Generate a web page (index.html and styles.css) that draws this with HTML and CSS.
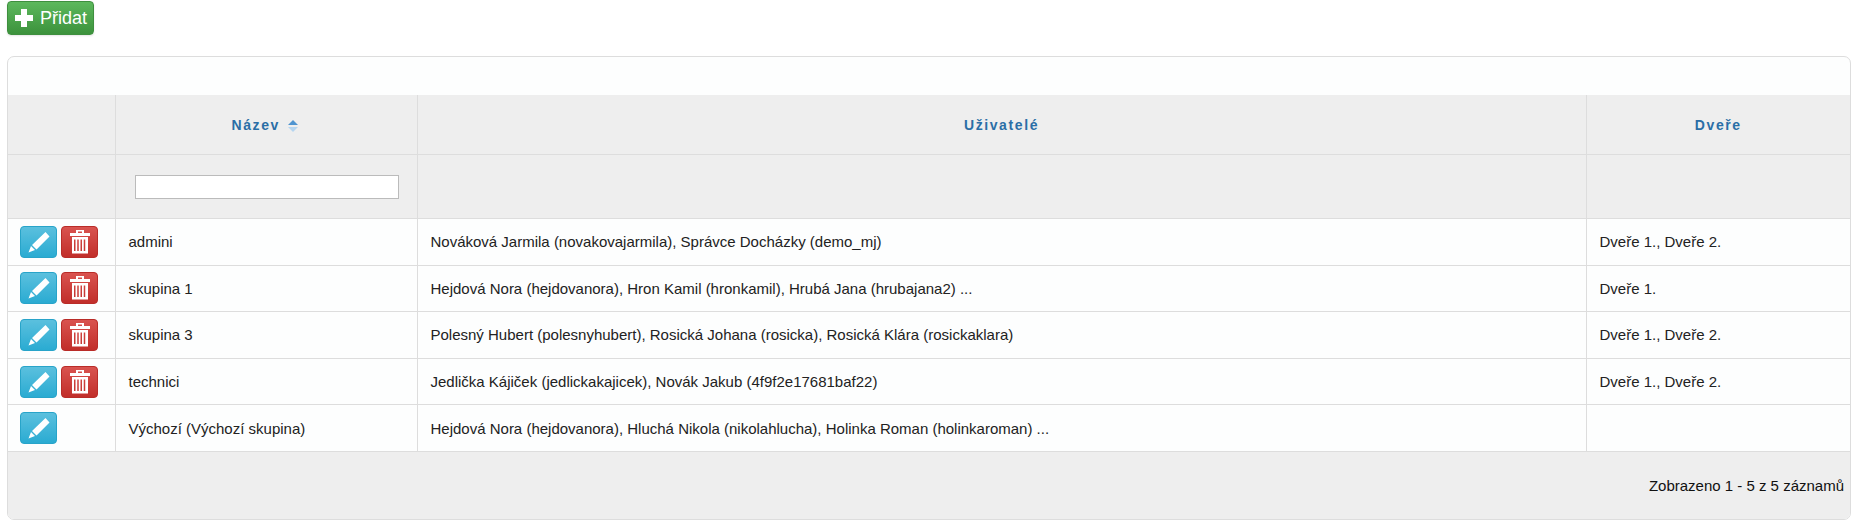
FILE: index.html
```html
<!DOCTYPE html>
<html lang="cs">
<head>
    <meta charset="UTF-8">
    <meta name="viewport" content="width=device-width, initial-scale=1.0">
    <title>Skupiny</title>
    <link rel="stylesheet" href="styles.css">
</head>
<body>
    <a class="btn btn-add" href="#">
        <svg class="icon-plus" viewBox="0 0 20 20"><path d="M7 1h6v6h6v6h-6v6H7v-6H1V7h6z"/></svg>
        Přidat
    </a>

    <div class="panel">
        <div class="panel-top"></div>
        <table class="grid">
            <colgroup>
                <col class="col-actions">
                <col class="col-name">
                <col class="col-users">
                <col class="col-doors">
            </colgroup>
            <thead>
                <tr class="head-row">
                    <th></th>
                    <th class="sorted">Název <svg class="sort" viewBox="0 0 10 12"><path class="sort-up" d="M5 0l5 5H0z"/><path class="sort-down" d="M0 7h10l-5 5z"/></svg></th>
                    <th>Uživatelé</th>
                    <th>Dveře</th>
                </tr>
                <tr class="filter-row">
                    <th></th>
                    <th><input type="text" class="filter"></th>
                    <th></th>
                    <th></th>
                </tr>
            </thead>
            <tbody>
                <tr>
                    <td class="actions">
                        <a class="btn btn-icon btn-edit" href="#"><svg viewBox="0 0 24 24"><path d="M18.500 2l4 4.500L9.500 19.500l-4.500-4.500zM4 16l4 4-6.500 2.500z"/></svg></a>
                        <a class="btn btn-icon btn-del" href="#"><svg viewBox="0 0 24 24"><path fill-rule="evenodd" d="M8 3V0h8v3h6v3H2V3zM10 1.500V3h4V1.500zM4 7h16v16.500H4zM6 9.500v11.500h1.500V9.500zM9.250 9.500v11.500h1.500V9.500zM12.500 9.500v11.500H14V9.500zM15.750 9.500v11.500h1.500V9.500z"/></svg></a>
                    </td>
                    <td>admini</td>
                    <td>Nováková Jarmila (novakovajarmila), Správce Docházky (demo_mj)</td>
                    <td>Dveře 1., Dveře 2.</td>
                </tr>
                <tr>
                    <td class="actions">
                        <a class="btn btn-icon btn-edit" href="#"><svg viewBox="0 0 24 24"><path d="M18.500 2l4 4.500L9.500 19.500l-4.500-4.500zM4 16l4 4-6.500 2.500z"/></svg></a>
                        <a class="btn btn-icon btn-del" href="#"><svg viewBox="0 0 24 24"><path fill-rule="evenodd" d="M8 3V0h8v3h6v3H2V3zM10 1.500V3h4V1.500zM4 7h16v16.500H4zM6 9.500v11.500h1.500V9.500zM9.250 9.500v11.500h1.500V9.500zM12.500 9.500v11.500H14V9.500zM15.750 9.500v11.500h1.500V9.500z"/></svg></a>
                    </td>
                    <td>skupina 1</td>
                    <td>Hejdová Nora (hejdovanora), Hron Kamil (hronkamil), Hrubá Jana (hrubajana2) ...</td>
                    <td>Dveře 1.</td>
                </tr>
                <tr>
                    <td class="actions">
                        <a class="btn btn-icon btn-edit" href="#"><svg viewBox="0 0 24 24"><path d="M18.500 2l4 4.500L9.500 19.500l-4.500-4.500zM4 16l4 4-6.500 2.500z"/></svg></a>
                        <a class="btn btn-icon btn-del" href="#"><svg viewBox="0 0 24 24"><path fill-rule="evenodd" d="M8 3V0h8v3h6v3H2V3zM10 1.500V3h4V1.500zM4 7h16v16.500H4zM6 9.500v11.500h1.500V9.500zM9.250 9.500v11.500h1.500V9.500zM12.500 9.500v11.500H14V9.500zM15.750 9.500v11.500h1.500V9.500z"/></svg></a>
                    </td>
                    <td>skupina 3</td>
                    <td>Polesný Hubert (polesnyhubert), Rosická Johana (rosicka), Rosická Klára (rosickaklara)</td>
                    <td>Dveře 1., Dveře 2.</td>
                </tr>
                <tr>
                    <td class="actions">
                        <a class="btn btn-icon btn-edit" href="#"><svg viewBox="0 0 24 24"><path d="M18.500 2l4 4.500L9.500 19.500l-4.500-4.500zM4 16l4 4-6.500 2.500z"/></svg></a>
                        <a class="btn btn-icon btn-del" href="#"><svg viewBox="0 0 24 24"><path fill-rule="evenodd" d="M8 3V0h8v3h6v3H2V3zM10 1.500V3h4V1.500zM4 7h16v16.500H4zM6 9.500v11.500h1.500V9.500zM9.250 9.500v11.500h1.500V9.500zM12.500 9.500v11.500H14V9.500zM15.750 9.500v11.500h1.500V9.500z"/></svg></a>
                    </td>
                    <td>technici</td>
                    <td>Jedlička Kájiček (jedlickakajicek), Novák Jakub (4f9f2e17681baf22)</td>
                    <td>Dveře 1., Dveře 2.</td>
                </tr>
                <tr>
                    <td class="actions">
                        <a class="btn btn-icon btn-edit" href="#"><svg viewBox="0 0 24 24"><path d="M18.500 2l4 4.500L9.500 19.500l-4.500-4.500zM4 16l4 4-6.500 2.500z"/></svg></a>
                    </td>
                    <td>Výchozí (Výchozí skupina)</td>
                    <td>Hejdová Nora (hejdovanora), Hluchá Nikola (nikolahlucha), Holinka Roman (holinkaroman) ...</td>
                    <td></td>
                </tr>
            </tbody>
        </table>
        <div class="panel-foot">Zobrazeno 1 - 5 z 5 záznamů</div>
    </div>
</body>
</html>
```

FILE: styles.css
```css
body {
    margin: 0;
    padding: 1px 5px 0 7px;
    font-family: "Liberation Sans", Arial, sans-serif;
    font-size: 15px;
    color: #222;
    background: #fff;
}
.btn {
    display: inline-flex;
    align-items: center;
    justify-content: center;
    box-sizing: border-box;
    border-radius: 4px;
    color: #fff;
    text-decoration: none;
}
.btn-add {
    width: 87px;
    height: 34px;
    gap: 6px;
    font-size: 18px;
    background: linear-gradient(#5cb85c, #3c923c);
    border: 1px solid #3e8f3e;
    box-shadow: 0 1px 2px rgba(0, 0, 0, .1);
}
.icon-plus {
    width: 20px;
    height: 20px;
    fill: #fff;
}
.panel {
    margin-top: 21px;
    border: 1px solid #ddd;
    border-radius: 7px;
    overflow: hidden;
    background: #fdfefe;
}
.panel-top {
    height: 38px;
}
.grid {
    width: 100%;
    table-layout: fixed;
    border-collapse: collapse;
}
.col-actions { width: 107px; }
.col-name { width: 302px; }
.col-users { width: 1169px; }
.grid th {
    background: #eee;
    border: 1px solid #ddd;
    border-top: 0;
    padding: 0;
    font-size: 14px;
    font-weight: bold;
    letter-spacing: 1.600px;
    color: #2a6ea6;
}
.grid th.sorted { padding-right: 2px; }
.grid th:first-child, .grid td:first-child { border-left: 0; }
.grid th:last-child, .grid td:last-child { border-right: 0; }
.head-row th { height: 59px; }
.filter-row th { height: 63px; }
.filter {
    display: block;
    box-sizing: border-box;
    width: 264px;
    height: 24px;
    margin: 1px 0 0 19px;
    padding: 0 4px;
    border: 1px solid #bbb;
    background: #fff;
}
.sort {
    width: 10px;
    height: 12px;
    margin-left: 3px;
    vertical-align: -2px;
}
.sort-up { fill: #4f94d0; }
.sort-down { fill: #b5d5f0; }
.grid td {
    height: 45.600px;
    padding: 0 0 0 13px;
    border: 1px solid #ddd;
    border-top: 0;
    vertical-align: middle;
    font-size: 15px;
    white-space: nowrap;
}
.grid td.actions {
    padding: 0 0 0 12px;
    font-size: 0;
}
.btn-icon {
    width: 37px;
    height: 32px;
    margin-right: 4px;
    vertical-align: middle;
}
.btn-icon svg {
    width: 24px;
    height: 24px;
    fill: #fff;
}
.btn-edit {
    background: linear-gradient(#5bc0de, #2aabd2);
    border: 1px solid #28a4c9;
}
.btn-del {
    background: linear-gradient(#d9534f, #c12e2a);
    border: 1px solid #b92c28;
}
.panel-foot {
    height: 67px;
    box-sizing: border-box;
    padding: 25px 6px 0 0;
    background: #eee;
    text-align: right;
    font-size: 15px;
    color: #111;
}
```
